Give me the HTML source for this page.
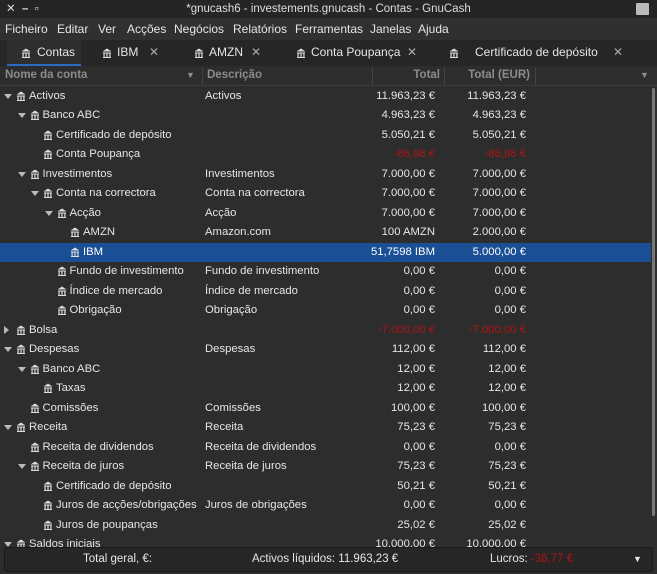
<!DOCTYPE html>
<html><head><meta charset="utf-8"><style>
*{margin:0;padding:0;box-sizing:border-box}
body{width:657px;height:574px;overflow:hidden;background:#2d2d2d;font-family:"Liberation Sans","DejaVu Sans",sans-serif;font-size:11.3px;color:#e6e6e6;position:relative}
.abs{position:absolute;white-space:nowrap}
#title{left:0;top:0;width:657px;height:18px;background:#252525;text-align:center;line-height:18px;font-size:11.5px;color:#ddd}
#menu{left:0;top:18px;width:657px;height:22px;background:#303030;line-height:22px;font-size:12px}
#tabs{left:0;top:40px;width:657px;height:26px;background:#262626;line-height:25px;font-size:12px}
.tab{position:absolute;top:0;height:26px}
.x{position:absolute;color:#aaa;font-size:12px}
#hdr{left:0;top:66px;width:657px;height:20px;background:#2d2d2d;border-bottom:1px solid #3c3c3c;color:#8c8c8c;font-weight:bold;line-height:19px;font-size:11.5px}
.sep{position:absolute;top:2px;width:1px;height:16px;background:#444}
.row{position:absolute;left:0;width:651px;height:19.5px;line-height:19.5px}
.sel{background:#1a4f96;color:#fff}
.r{position:absolute;text-align:right}
.neg{color:#b01515}
.ic{position:absolute;width:10px;height:10px;top:4px}
.arr{position:absolute;top:7px;width:0;height:0}
.dn{border-left:4px solid transparent;border-right:4px solid transparent;border-top:5px solid #bbb}
.rt{top:5px;border-top:4px solid transparent;border-bottom:4px solid transparent;border-left:5px solid #bbb}
#foot{left:4px;top:547px;width:649px;height:25px;background:#262626;border:1px solid #1a1a1a;border-radius:3px;line-height:23px;font-size:11.5px}
</style></head><body>
<svg width="0" height="0" style="position:absolute"><defs><symbol id="b" viewBox="0 0 10 10"><path d="M5 0.5 L9.5 3.5 H0.5Z M1 4.5h8v1H1z M1 9h8v1H1z M1.5 5.5h1.2v3.5H1.5z M4.4 5.5h1.2v3.5H4.4z M7.3 5.5h1.2v3.5H7.3z" fill="#ddd"/></symbol></defs></svg>
<div id="title" class="abs"><span style="position:absolute;left:6px;font-weight:bold">✕ &nbsp;– &nbsp;▫</span>*gnucash6 - investements.gnucash - Contas - GnuCash<span style="position:absolute;right:8px;top:3px;width:13px;height:12px;background:#bbb;border-radius:1px"></span></div>
<div id="menu" class="abs"><span class="abs" style="left:5px">Ficheiro</span><span class="abs" style="left:57px">Editar</span><span class="abs" style="left:98px">Ver</span><span class="abs" style="left:127px">Acções</span><span class="abs" style="left:174px">Negócios</span><span class="abs" style="left:233px">Relatórios</span><span class="abs" style="left:295px">Ferramentas</span><span class="abs" style="left:370px">Janelas</span><span class="abs" style="left:418px">Ajuda</span></div>
<div id="tabs" class="abs">
<div class="tab" style="left:7px;width:74px;background:#2e2e2e;border-bottom:2px solid #2a6ac0"></div>
<svg class="ic" style="left:21px;top:8px"><use href="#b"/></svg><span class="abs" style="left:37px">Contas</span>
<svg class="ic" style="left:102px;top:8px"><use href="#b"/></svg><span class="abs" style="left:117px">IBM</span><span class="x" style="left:149px">✕</span>
<svg class="ic" style="left:194px;top:8px"><use href="#b"/></svg><span class="abs" style="left:209px">AMZN</span><span class="x" style="left:251px">✕</span>
<svg class="ic" style="left:296px;top:8px"><use href="#b"/></svg><span class="abs" style="left:311px">Conta Poupança</span><span class="x" style="left:407px">✕</span>
<svg class="ic" style="left:449px;top:8px"><use href="#b"/></svg><span class="abs" style="left:475px">Certificado de depósito</span><span class="x" style="left:613px">✕</span>
</div>
<div id="hdr" class="abs">
<span class="abs" style="left:5px">Nome da conta</span><span class="abs" style="left:186px;font-size:9px">▼</span>
<div class="sep" style="left:202px"></div><span class="abs" style="left:207px">Descrição</span>
<div class="sep" style="left:372px"></div><span class="r" style="right:217px">Total</span>
<div class="sep" style="left:444px"></div><span class="r" style="right:127px">Total (EUR)</span>
<div class="sep" style="left:535px"></div><span class="abs" style="left:640px;font-size:9px">▼</span>
</div>
<div class="abs" style="left:652px;top:88px;width:3px;height:428px;background:#777;border-radius:2px"></div>
<div id="rows"></div>
<div id="foot" class="abs"><span class="abs" style="left:78px">Total geral, €:</span><span class="abs" style="left:247px">Activos líquidos: 11.963,23 €</span><span class="abs" style="left:485px">Lucros: <span class="neg">-36,77 €</span></span><span class="abs" style="left:628px;font-size:9px">▼</span></div>
<script>
var R=[
[0,1,"Activos","Activos","11.963,23 €","11.963,23 €"],
[1,1,"Banco ABC","","4.963,23 €","4.963,23 €"],
[2,0,"Certificado de depósito","","5.050,21 €","5.050,21 €"],
[2,0,"Conta Poupança","","-86,98 €","-86,98 €"],
[1,1,"Investimentos","Investimentos","7.000,00 €","7.000,00 €"],
[2,1,"Conta na correctora","Conta na correctora","7.000,00 €","7.000,00 €"],
[3,1,"Acção","Acção","7.000,00 €","7.000,00 €"],
[4,0,"AMZN","Amazon.com","100 AMZN","2.000,00 €"],
[4,0,"IBM","","51,7598 IBM","5.000,00 €",1],
[3,0,"Fundo de investimento","Fundo de investimento","0,00 €","0,00 €"],
[3,0,"Índice de mercado","Índice de mercado","0,00 €","0,00 €"],
[3,0,"Obrigação","Obrigação","0,00 €","0,00 €"],
[0,2,"Bolsa","","-7.000,00 €","-7.000,00 €"],
[0,1,"Despesas","Despesas","112,00 €","112,00 €"],
[1,1,"Banco ABC","","12,00 €","12,00 €"],
[2,0,"Taxas","","12,00 €","12,00 €"],
[1,0,"Comissões","Comissões","100,00 €","100,00 €"],
[0,1,"Receita","Receita","75,23 €","75,23 €"],
[1,0,"Receita de dividendos","Receita de dividendos","0,00 €","0,00 €"],
[1,1,"Receita de juros","Receita de juros","75,23 €","75,23 €"],
[2,0,"Certificado de depósito","","50,21 €","50,21 €"],
[2,0,"Juros de acções/obrigações","Juros de obrigações","0,00 €","0,00 €"],
[2,0,"Juros de poupanças","","25,02 €","25,02 €"],
[0,1,"Saldos iniciais","","10.000,00 €","10.000,00 €"]];
var h="";
R.forEach(function(r,i){
var y=86.5+i*19.5,x=16+r[0]*13.5,neg=r[4][0]=="-";
h+='<div class="row'+(r[6]?' sel':'')+'" style="top:'+y+'px">';
if(r[1])h+='<span class="arr '+(r[1]==1?'dn':'rt')+'" style="left:'+(x-12)+'px"></span>';
h+='<svg class="ic" style="left:'+x+'px"><use href="#b"/></svg><span class="abs" style="left:'+(x+13)+'px">'+r[2]+'</span>';
h+='<span class="abs" style="left:205px">'+r[3]+'</span>';
h+='<span class="r'+(neg?' neg':'')+'" style="right:216px">'+r[4]+'</span>';
h+='<span class="r'+(neg?' neg':'')+'" style="right:125px">'+r[5]+'</span></div>';
});
document.getElementById("rows").innerHTML=h;
</script>
</body></html>
